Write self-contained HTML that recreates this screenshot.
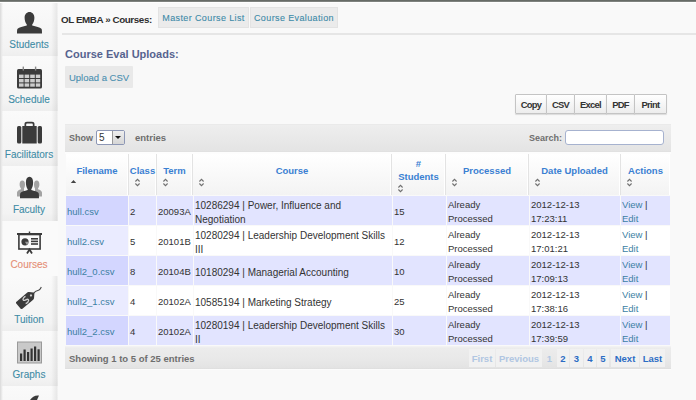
<!DOCTYPE html>
<html><head><meta charset="utf-8">
<style>
*{margin:0;padding:0;box-sizing:border-box}
html,body{width:696px;height:400px;overflow:hidden;background:#f9f9f9;font-family:"Liberation Sans",sans-serif;color:#333}
.abs{position:absolute}
#topbar{left:0;top:0;width:696px;height:3px;background:linear-gradient(#5f645f 0,#6f736f 1px,#8e918e 2px,#ffffff 2px,#ffffff 3px);z-index:5}
#side{left:0;top:2px;width:58px;height:398px;background:#f4f4f4}
.it{position:absolute;left:0;width:58px;height:55px;background:linear-gradient(to right,#d9d9d9 0,#e9e9e9 1.5px,rgba(255,255,255,0) 3px,rgba(255,255,255,0) 51px,rgba(0,0,0,.035) 54px,rgba(0,0,0,.07) 57px,rgba(0,0,0,0) 58px),linear-gradient(#fafafa,#f3f3f3 85%,#eeeeee)}
.act{background:linear-gradient(to right,#d9d9d9 0,#e9e9e9 1.5px,rgba(255,255,255,0) 3px),#fafafa}
.lbl{position:absolute;left:0;width:58px;text-align:center;font-size:10px;color:#3f8ca6;line-height:12px}
svg{position:absolute;display:block}
#crumb{left:61px;top:14px;font-size:9.8px;font-weight:bold;color:#2f2f2f;line-height:11px;letter-spacing:-0.4px}
.tab{top:7px;height:21px;background:#ebebeb;box-shadow:inset 0 0 0 1px #e3e3e3;font-size:9px;color:#3d8aa8;line-height:22px;text-align:center;letter-spacing:0.38px}
#hr{left:62px;top:33px;width:634px;height:2px;background:#e6e6e6}
#h2{left:65px;top:47px;font-size:11px;font-weight:bold;color:#56638f;line-height:14px}
#upl{left:65px;top:66px;width:68px;height:22px;background:#e9e9e9;border-radius:1px;font-size:9.5px;color:#4a8fb0;line-height:24px;text-align:center}
.tt{top:94px;height:20px;border-radius:1px;background:linear-gradient(#ffffff,#ededed);border:1px solid #c4c4c4;font-size:9.4px;font-weight:bold;color:#333;line-height:19px;text-align:center;letter-spacing:-0.7px;box-shadow:0 1px 1px rgba(0,0,0,.12)}
#bar1{left:65px;top:124px;width:606px;height:28px;background:linear-gradient(#e6e6e6 0,#eeeeee 1px,#e8e8e8 60%,#e4e4e4 27px,#dedede 28px)}
#w1{left:65px;top:152px;width:606px;height:2px;background:#fdfdfd}
#bar2{left:65px;top:346px;width:606px;height:24px;background:linear-gradient(#f4f4f4 0,#ececec 2px,#e8e8e8 60%,#e3e3e3 22px,#dcdcdc 23px,#fcfcfc 23px)}
.gl{font-size:9px;font-weight:bold;color:#6e6e6e;line-height:12px}
.th{top:154px;height:41px;background:linear-gradient(#ffffff,#f3f3f3);border-right:1px solid #e3e3e3;box-shadow:inset -1px 0 0 #fff;font-size:9.5px;font-weight:bold;color:#3a80d2;text-align:center;line-height:12px}
.arr{position:absolute;font-size:8px;color:#555;line-height:8px}
.td{height:29px;font-size:9.5px;color:#333;line-height:13.6px;padding-left:1px;padding-top:3px;display:flex;align-items:center}
.o{background:#e2e4ff}.os{background:#d3d6ff}.e{background:#ffffff}.es{background:#eaebff}
a{color:#3c7fa3;text-decoration:none}
.lbl,.tab,#upl{-webkit-text-stroke:0.1px}
.pg{position:absolute;top:349px;height:18px;font-size:9.5px;font-weight:bold;line-height:20px;text-align:center;background:#f1f1f1}
.pd{color:#b0c6e2}.pa{color:#2c6cc4}
</style></head><body>
<div id="topbar" class="abs"></div>
<div id="side" class="abs"></div>
<div class="it" style="top:2px;height:54px"></div>
<div class="it" style="top:56px;"></div>
<div class="it" style="top:111px;"></div>
<div class="it" style="top:166px;"></div>
<div class="it act" style="top:221px;"></div>
<div class="it" style="top:276px;"></div>
<div class="it" style="top:331px;"></div>
<div class="it" style="top:386px;"></div>

<!-- Students icon -->
<svg style="left:16px;top:11px" width="27" height="23" viewBox="0 0 27 23">
<path d="M13.5 1 C10.8 1 8.6 3.2 8.6 6.8 C8.6 9.6 9.6 12.2 10.8 13.6 L10.8 14.4 C7 15.4 3 16.2 1.6 17.8 C1.1 18.5 1 19.5 1 22.4 L26 22.4 C26 19.5 25.9 18.5 25.4 17.8 C24 16.2 20 15.4 16.2 14.4 L16.2 13.6 C17.4 12.2 18.4 9.6 18.4 6.8 C18.4 3.2 16.2 1 13.5 1 Z" fill="#3b3b3b"/>
</svg>
<div class="lbl" style="top:39px">Students</div>

<!-- Schedule icon -->
<svg style="left:16px;top:66px" width="27" height="23" viewBox="0 0 27 23">
<rect x="1" y="3" width="25" height="19.5" rx="1.5" fill="#3b3b3b"/>
<rect x="6.6" y="0.6" width="1.4" height="4" fill="#888"/>
<rect x="18.9" y="0.6" width="1.4" height="4" fill="#888"/>
<g fill="#cdcdcd">
<rect x="3" y="8.6" width="4.6" height="3.4"/><rect x="8.6" y="8.6" width="4.6" height="3.4"/><rect x="14.2" y="8.6" width="4.6" height="3.4"/><rect x="19.8" y="8.6" width="4.4" height="3.4"/>
<rect x="3" y="13" width="4.6" height="3.4"/><rect x="8.6" y="13" width="4.6" height="3.4"/><rect x="14.2" y="13" width="4.6" height="3.4"/><rect x="19.8" y="13" width="4.4" height="3.4"/>
<rect x="3" y="17.4" width="4.6" height="3.3"/><rect x="8.6" y="17.4" width="4.6" height="3.3"/><rect x="14.2" y="17.4" width="4.6" height="3.3"/><rect x="19.8" y="17.4" width="4.4" height="3.3"/>
</g>
</svg>
<div class="lbl" style="top:94px">Schedule</div>

<!-- Facilitators icon -->
<svg style="left:16px;top:121px" width="27" height="23" viewBox="0 0 27 23">
<path d="M8.5 5 L8.5 3 C8.5 1.5 9.5 0.8 11 0.8 L16 0.8 C17.5 0.8 18.5 1.5 18.5 3 L18.5 5 L16.8 5 L16.8 3.3 C16.8 2.8 16.5 2.6 16 2.6 L11 2.6 C10.5 2.6 10.2 2.8 10.2 3.3 L10.2 5 Z" fill="#3b3b3b"/>
<rect x="1" y="5" width="4.3" height="17.5" rx="1.5" fill="#3b3b3b"/>
<rect x="6.3" y="5" width="14.4" height="17.5" fill="#3b3b3b"/>
<rect x="21.7" y="5" width="4.3" height="17.5" rx="1.5" fill="#3b3b3b"/>
</svg>
<div class="lbl" style="top:149px">Facilitators</div>

<!-- Faculty icon -->
<svg style="left:16px;top:176px" width="27" height="23" viewBox="0 0 27 23">
<path d="M6.3 4.5 C4.6 4.5 3.6 6 3.6 8.2 C3.6 10.2 4.3 11.6 5 12.6 L5 13.2 C2.8 14 1.2 14.8 1 16.5 L1 20.5 L8 20.5 L8 12.5 C8.6 11.5 9 10 9 8.2 C9 6 8 4.5 6.3 4.5 Z" fill="#a3a3a3"/>
<path d="M20.7 4.5 C22.4 4.5 23.4 6 23.4 8.2 C23.4 10.2 22.7 11.6 22 12.6 L22 13.2 C24.2 14 25.8 14.8 26 16.5 L26 20.5 L19 20.5 L19 12.5 C18.4 11.5 18 10 18 8.2 C18 6 19 4.5 20.7 4.5 Z" fill="#a3a3a3"/>
<path d="M13.5 0.8 C11.2 0.8 9.9 3 9.9 6.5 C9.9 9.5 10.7 12 11.7 13.3 L11.7 13.9 C8.5 14.8 5.6 15.4 4.6 16.8 C4.1 17.5 4 18.5 4 22.3 L23 22.3 C23 18.5 22.9 17.5 22.4 16.8 C21.4 15.4 18.5 14.8 15.3 13.9 L15.3 13.3 C16.3 12 17.1 9.5 17.1 6.5 C17.1 3 15.8 0.8 13.5 0.8 Z" fill="#3b3b3b"/>
</svg>
<div class="lbl" style="top:204px">Faculty</div>

<!-- Courses icon -->
<svg style="left:16px;top:231px" width="27" height="23" viewBox="0 0 27 23">
<rect x="12.8" y="0.5" width="1.4" height="2" fill="#3b3b3b"/>
<rect x="1" y="2" width="25" height="2" fill="#3b3b3b"/>
<rect x="2.9" y="3.5" width="21.2" height="14.5" fill="none" stroke="#3b3b3b" stroke-width="1.6"/>
<circle cx="9" cy="10.8" r="3.6" fill="#3b3b3b"/>
<path d="M9 10.8 L12.6 10.8 A3.6 3.6 0 0 1 10.8 14 Z" fill="#999"/>
<rect x="15" y="7" width="7" height="1.6" fill="#3b3b3b"/>
<rect x="15" y="9.6" width="7" height="1.6" fill="#3b3b3b"/>
<rect x="15" y="12.2" width="7" height="1.6" fill="#3b3b3b"/>
<path d="M11 22.5 L13.5 18.5 L16 22.5" fill="none" stroke="#3b3b3b" stroke-width="1.8"/>
</svg>
<div class="lbl" style="top:259px;color:#e58d74">Courses</div>

<!-- Tuition icon -->
<svg style="left:16px;top:286px" width="27" height="23" viewBox="0 0 27 23">
<path d="M17.5 7.5 C19 5 21 4.5 22.5 4.2 C24 4 24.5 2.5 25.3 1" fill="none" stroke="#444" stroke-width="1.1"/>
<g transform="translate(10.8 13) rotate(-40)">
<path d="M-10 -4.6 L4.5 -4.6 C5.3 -4.6 5.8 -4.3 6.3 -3.8 L9.2 -0.8 C9.6 -0.4 9.6 0.4 9.2 0.8 L6.3 3.8 C5.8 4.3 5.3 4.6 4.5 4.6 L-10 4.6 C-10.6 4.6 -11 4.2 -11 3.6 L-11 -3.6 C-11 -4.2 -10.6 -4.6 -10 -4.6 Z" fill="#3b3b3b"/>
<circle cx="5.5" cy="0" r="1.1" fill="#d0d0d0"/>
<path d="M0.8 -2.9 C0 -3.3 -3.6 -3.3 -3.4 -1.2 C-3.2 0.4 0.6 -0.4 0.8 1.3 C1 3.3 -2.8 3.3 -3.8 2.7" fill="none" stroke="#cfcfcf" stroke-width="1.3"/>
</g>
</svg>
<div class="lbl" style="top:314px">Tuition</div>

<!-- Graphs icon -->
<svg style="left:16px;top:341px" width="27" height="23" viewBox="0 0 27 23">
<rect x="1.5" y="1" width="24" height="21" fill="#c9c9c9" stroke="#9a9a9a" stroke-width="1"/>
<g fill="#333">
<rect x="4" y="12.5" width="2.2" height="7.5"/><rect x="7.5" y="8.5" width="2.2" height="11.5"/><rect x="11" y="11" width="2.2" height="9"/><rect x="14.5" y="7.5" width="2.2" height="12.5"/><rect x="18" y="5.5" width="2.2" height="14.5"/><rect x="21.5" y="8.3" width="2.2" height="11.7"/>
</g>
</svg>
<div class="lbl" style="top:369px">Graphs</div>

<!-- bottom partial icon -->
<svg style="left:28px;top:394px" width="14" height="6" viewBox="0 0 14 6">
<path d="M2 6 C4 3 7 1 11 1.5 L9 6 Z" fill="#3b3b3b"/>
</svg>

<!-- header -->
<div id="crumb" class="abs">OL EMBA » Courses:</div>
<div class="tab abs" style="left:158px;width:91px">Master Course List</div>
<div class="tab abs" style="left:250px;width:88px">Course Evaluation</div>
<div id="hr" class="abs"></div>
<div id="h2" class="abs">Course Eval Uploads:</div>
<div id="upl" class="abs">Upload a CSV</div>

<div class="tt abs" style="left:515px;width:32px">Copy</div>
<div class="tt abs" style="left:546px;width:29px">CSV</div>
<div class="tt abs" style="left:574px;width:33px">Excel</div>
<div class="tt abs" style="left:606px;width:29px">PDF</div>
<div class="tt abs" style="left:634px;width:33px">Print</div>

<div id="bar1" class="abs"></div>
<div id="w1" class="abs"></div>
<div class="gl abs" style="left:69px;top:132px">Show</div>
<div class="abs" style="left:96px;top:130px;width:29px;height:15px;border:1px solid #8d97b5;border-radius:2px;background:#fff"></div>
<div class="abs" style="left:99px;top:131px;font-size:10px;color:#333;line-height:13px">5</div>
<div class="abs" style="left:112px;top:131px;width:12px;height:13px;background:linear-gradient(#eee,#d6d6d6);border-left:1px solid #999"></div>
<div class="abs" style="left:115px;top:136px;width:0;height:0;border-left:3px solid transparent;border-right:3px solid transparent;border-top:3px solid #111"></div>
<div class="gl abs" style="left:135px;top:132px;font-size:9.5px">entries</div>
<div class="gl abs" style="left:529px;top:132px">Search:</div>
<div class="abs" style="left:565px;top:130px;width:99px;height:15px;border:1px solid #a6b2cf;border-radius:3px;background:#fff"></div>

<!-- table header -->
<div class="th abs" style="left:66px;width:63px;padding-top:11px">Filename<svg class="arr" style="left:3.5px;top:25px" width="7" height="5" viewBox="0 0 7 5"><path d="M0.8 4 L3.5 1 L6.2 4 Z" fill="#444"/></svg></div>
<div class="th abs" style="left:129px;width:28px;padding-top:11px">Class<svg class="arr" style="left:5px;top:24px" width="7" height="9" viewBox="0 0 7 9"><path d="M1.4 3.5 L3.5 1.3 L5.6 3.5 M1.4 5.5 L3.5 7.7 L5.6 5.5" fill="none" stroke="#707070" stroke-width="1.1"/></svg></div>
<div class="th abs" style="left:157px;width:36px;padding-top:11px">Term<svg class="arr" style="left:5px;top:24px" width="7" height="9" viewBox="0 0 7 9"><path d="M1.4 3.5 L3.5 1.3 L5.6 3.5 M1.4 5.5 L3.5 7.7 L5.6 5.5" fill="none" stroke="#707070" stroke-width="1.1"/></svg></div>
<div class="th abs" style="left:193px;width:199px;padding-top:11px">Course<svg class="arr" style="left:5px;top:24px" width="7" height="9" viewBox="0 0 7 9"><path d="M1.4 3.5 L3.5 1.3 L5.6 3.5 M1.4 5.5 L3.5 7.7 L5.6 5.5" fill="none" stroke="#707070" stroke-width="1.1"/></svg></div>
<div class="th abs" style="left:392px;width:54px;padding-top:2.5px;line-height:13px">#<br>Students<svg class="arr" style="left:5px;top:30px" width="7" height="9" viewBox="0 0 7 9"><path d="M1.4 3.5 L3.5 1.3 L5.6 3.5 M1.4 5.5 L3.5 7.7 L5.6 5.5" fill="none" stroke="#707070" stroke-width="1.1"/></svg></div>
<div class="th abs" style="left:446px;width:83px;padding-top:11px">Processed<svg class="arr" style="left:5px;top:24px" width="7" height="9" viewBox="0 0 7 9"><path d="M1.4 3.5 L3.5 1.3 L5.6 3.5 M1.4 5.5 L3.5 7.7 L5.6 5.5" fill="none" stroke="#707070" stroke-width="1.1"/></svg></div>
<div class="th abs" style="left:529px;width:92px;padding-top:11px">Date Uploaded<svg class="arr" style="left:5px;top:24px" width="7" height="9" viewBox="0 0 7 9"><path d="M1.4 3.5 L3.5 1.3 L5.6 3.5 M1.4 5.5 L3.5 7.7 L5.6 5.5" fill="none" stroke="#707070" stroke-width="1.1"/></svg></div>
<div class="th abs" style="left:621px;width:49px;padding-top:11px;border-right:0">Actions<svg class="arr" style="left:5px;top:24px" width="7" height="9" viewBox="0 0 7 9"><path d="M1.4 3.5 L3.5 1.3 L5.6 3.5 M1.4 5.5 L3.5 7.7 L5.6 5.5" fill="none" stroke="#707070" stroke-width="1.1"/></svg></div>

<div id="rows">
<div class="td abs os" style="left:66px;top:196px;width:62px"><div><a>hull.csv</a></div></div>
<div class="td abs o" style="left:129px;top:196px;width:27px"><div>2</div></div>
<div class="td abs o" style="left:157px;top:196px;width:36px"><div>20093A</div></div>
<div class="td abs o" style="font-size:10px;padding-top:4px;left:194px;top:196px;width:198px"><div>10286294 | Power, Influence and<br>Negotiation</div></div>
<div class="td abs o" style="left:393px;top:196px;width:53px"><div>15</div></div>
<div class="td abs o" style="left:447px;top:196px;width:82px"><div>Already<br>Processed</div></div>
<div class="td abs o" style="left:530px;top:196px;width:90px"><div>2012-12-13<br>17:23:11</div></div>
<div class="td abs o" style="left:621px;top:196px;width:49px"><div><a>View</a> |<br><a>Edit</a></div></div>
<div class="td abs es" style="left:66px;top:226px;width:62px"><div><a>hull2.csv</a></div></div>
<div class="td abs e" style="left:129px;top:226px;width:27px"><div>5</div></div>
<div class="td abs e" style="left:157px;top:226px;width:36px"><div>20101B</div></div>
<div class="td abs e" style="font-size:10px;padding-top:4px;left:194px;top:226px;width:198px"><div>10280294 | Leadership Development Skills<br>III</div></div>
<div class="td abs e" style="left:393px;top:226px;width:53px"><div>12</div></div>
<div class="td abs e" style="left:447px;top:226px;width:82px"><div>Already<br>Processed</div></div>
<div class="td abs e" style="left:530px;top:226px;width:90px"><div>2012-12-13<br>17:01:21</div></div>
<div class="td abs e" style="left:621px;top:226px;width:49px"><div><a>View</a> |<br><a>Edit</a></div></div>
<div class="td abs os" style="left:66px;top:256px;width:62px"><div><a>hull2_0.csv</a></div></div>
<div class="td abs o" style="left:129px;top:256px;width:27px"><div>8</div></div>
<div class="td abs o" style="left:157px;top:256px;width:36px"><div>20104B</div></div>
<div class="td abs o" style="font-size:10px;padding-top:4px;left:194px;top:256px;width:198px"><div>10180294 | Managerial Accounting</div></div>
<div class="td abs o" style="left:393px;top:256px;width:53px"><div>10</div></div>
<div class="td abs o" style="left:447px;top:256px;width:82px"><div>Already<br>Processed</div></div>
<div class="td abs o" style="left:530px;top:256px;width:90px"><div>2012-12-13<br>17:09:13</div></div>
<div class="td abs o" style="left:621px;top:256px;width:49px"><div><a>View</a> |<br><a>Edit</a></div></div>
<div class="td abs es" style="left:66px;top:286px;width:62px"><div><a>hull2_1.csv</a></div></div>
<div class="td abs e" style="left:129px;top:286px;width:27px"><div>4</div></div>
<div class="td abs e" style="left:157px;top:286px;width:36px"><div>20102A</div></div>
<div class="td abs e" style="font-size:10px;padding-top:4px;left:194px;top:286px;width:198px"><div>10585194 | Marketing Strategy</div></div>
<div class="td abs e" style="left:393px;top:286px;width:53px"><div>25</div></div>
<div class="td abs e" style="left:447px;top:286px;width:82px"><div>Already<br>Processed</div></div>
<div class="td abs e" style="left:530px;top:286px;width:90px"><div>2012-12-13<br>17:38:16</div></div>
<div class="td abs e" style="left:621px;top:286px;width:49px"><div><a>View</a> |<br><a>Edit</a></div></div>
<div class="td abs os" style="left:66px;top:316px;width:62px"><div><a>hull2_2.csv</a></div></div>
<div class="td abs o" style="left:129px;top:316px;width:27px"><div>4</div></div>
<div class="td abs o" style="left:157px;top:316px;width:36px"><div>20102A</div></div>
<div class="td abs o" style="font-size:10px;padding-top:4px;left:194px;top:316px;width:198px"><div>10280194 | Leadership Development Skills<br>II</div></div>
<div class="td abs o" style="left:393px;top:316px;width:53px"><div>30</div></div>
<div class="td abs o" style="left:447px;top:316px;width:82px"><div>Already<br>Processed</div></div>
<div class="td abs o" style="left:530px;top:316px;width:90px"><div>2012-12-13<br>17:39:59</div></div>
<div class="td abs o" style="left:621px;top:316px;width:49px"><div><a>View</a> |<br><a>Edit</a></div></div>
</div><!--/rows-->

<div id="bar2" class="abs"></div>
<div class="gl abs" style="left:69px;top:353px;font-size:9.5px">Showing 1 to 5 of 25 entries</div>
<div class="pg pd" style="left:469px;width:26px">First</div>
<div class="pg pd" style="left:496px;width:46px">Previous</div>
<div class="pg pd" style="left:544px;width:11px;background:none">1</div>
<div class="pg pa" style="left:557px;width:12px">2</div>
<div class="pg pa" style="left:570px;width:13px">3</div>
<div class="pg pa" style="left:584px;width:12px">4</div>
<div class="pg pa" style="left:597px;width:12px">5</div>
<div class="pg pa" style="left:611px;width:28px">Next</div>
<div class="pg pa" style="left:640px;width:25px">Last</div>
</body></html>
